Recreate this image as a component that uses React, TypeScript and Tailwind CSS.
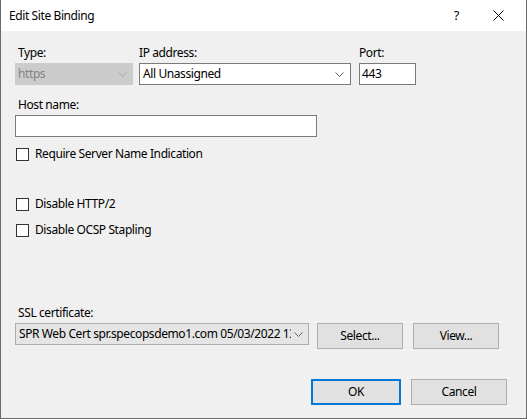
import React from "react";

const font = { fontFamily: '"Segoe UI", "Noto Sans", Arial, sans-serif' };

function Chevron({ color = "#606060" }: { color?: string }) {
  return (
    <svg width="9" height="5" viewBox="0 0 9 5" className="shrink-0">
      <path d="M0.5 0.5 L4.5 4.5 L8.5 0.5" fill="none" stroke={color} strokeWidth="1" />
    </svg>
  );
}

function Check({ label, className = "" }: { label: string; className?: string }) {
  return (
    <div className={`flex items-center h-[16px] pl-[1px] ${className}`}>
      <div className="w-[13px] h-[13px] border border-[#333333] bg-white shrink-0" />
      <span className="ml-[6px] text-[12px] leading-[16px] text-black">{label}</span>
    </div>
  );
}

function Btn({ label, className = "" }: { label: string; className?: string }) {
  return (
    <div
      className={`flex items-center justify-center bg-[#e1e1e1] border border-[#adadad] text-[12px] text-black ${className}`}
    >
      {label}
    </div>
  );
}

export default function App() {
  return (
    <div
      style={font}
      className="w-[527px] h-[419px] flex flex-col bg-[#f0f0f0] border-l border-r border-b border-[#6a6a6a] overflow-hidden tracking-[-0.4px]"
    >
      <div className="h-[31px] bg-white flex items-center shrink-0">
        <span className="ml-[8px] text-[12px] text-black">Edit Site Binding</span>
        <span className="ml-auto mr-[34px] text-[13px] text-black">?</span>
        <svg width="11" height="11" viewBox="0 0 11 11" className="mr-[22px]">
          <path d="M0.5 0.5 L10.5 10.5 M10.5 0.5 L0.5 10.5" stroke="#000" strokeWidth="1" />
        </svg>
      </div>

      <div className="flex flex-col pl-[14px] pt-[14px]">
        <div className="flex">
          <div className="flex flex-col w-[118px]">
            <span className="pl-[3px] h-[16px] leading-[16px] text-[12px] text-black">Type:</span>
            <div className="mt-[2px] h-[22px] bg-[#cccccc] flex items-center pl-[3px] pr-[6px]">
              <span className="text-[12px] text-[#838383] flex-1">https</span>
              <Chevron color="#a8a8a8" />
            </div>
          </div>
          <div className="flex flex-col w-[212px] ml-[6px]">
            <span className="h-[16px] leading-[16px] text-[12px] text-black">IP address:</span>
            <div className="mt-[2px] h-[22px] bg-white border border-[#7a7a7a] flex items-center pl-[3px] pr-[6px]">
              <span className="text-[12px] text-black flex-1">All Unassigned</span>
              <Chevron />
            </div>
          </div>
          <div className="flex flex-col w-[57px] ml-[8px]">
            <span className="h-[16px] leading-[16px] text-[12px] text-black">Port:</span>
            <div className="mt-[2px] h-[22px] bg-white border border-[#7a7a7a] flex items-center pl-[2px]">
              <span className="text-[12px] text-black">443</span>
            </div>
          </div>
        </div>

        <span className="mt-[12px] pl-[3px] h-[16px] leading-[16px] text-[12px] text-black">Host name:</span>
        <div className="mt-[2px] w-[302px] h-[22px] bg-white border border-[#7a7a7a]" />

        <Check label="Require Server Name Indication" className="mt-[9px]" />
        <Check label="Disable HTTP/2" className="mt-[34px]" />
        <Check label="Disable OCSP Stapling" className="mt-[10px]" />

        <span className="mt-[67px] pl-[3px] h-[16px] leading-[16px] text-[12px] text-black">SSL certificate:</span>
        <div className="mt-[2px] flex items-start">
          <div className="w-[294px] h-[22px] bg-[#e5e5e5] border border-[#adadad] flex items-center pl-[3px] pr-[5px]">
            <div className="flex-1 overflow-hidden mr-[3px]">
              <span className="block text-[12px] text-black whitespace-nowrap">
                SPR Web Cert spr.specopsdemo1.com 05/03/2022 13:
              </span>
            </div>
            <Chevron />
          </div>
          <Btn label="Select..." className="ml-[8px] w-[86px] h-[26px]" />
          <Btn label="View..." className="ml-[10px] w-[86px] h-[26px]" />
        </div>

        <div className="mt-[30px] flex pl-[296px]">
          <div className="w-[90px] h-[26px] flex items-center justify-center bg-[#e1e1e1] border-2 border-[#0078d7] text-[12px] text-black">
            OK
          </div>
          <Btn label="Cancel" className="ml-[10px] w-[96px] h-[26px]" />
        </div>
      </div>
    </div>
  );
}
